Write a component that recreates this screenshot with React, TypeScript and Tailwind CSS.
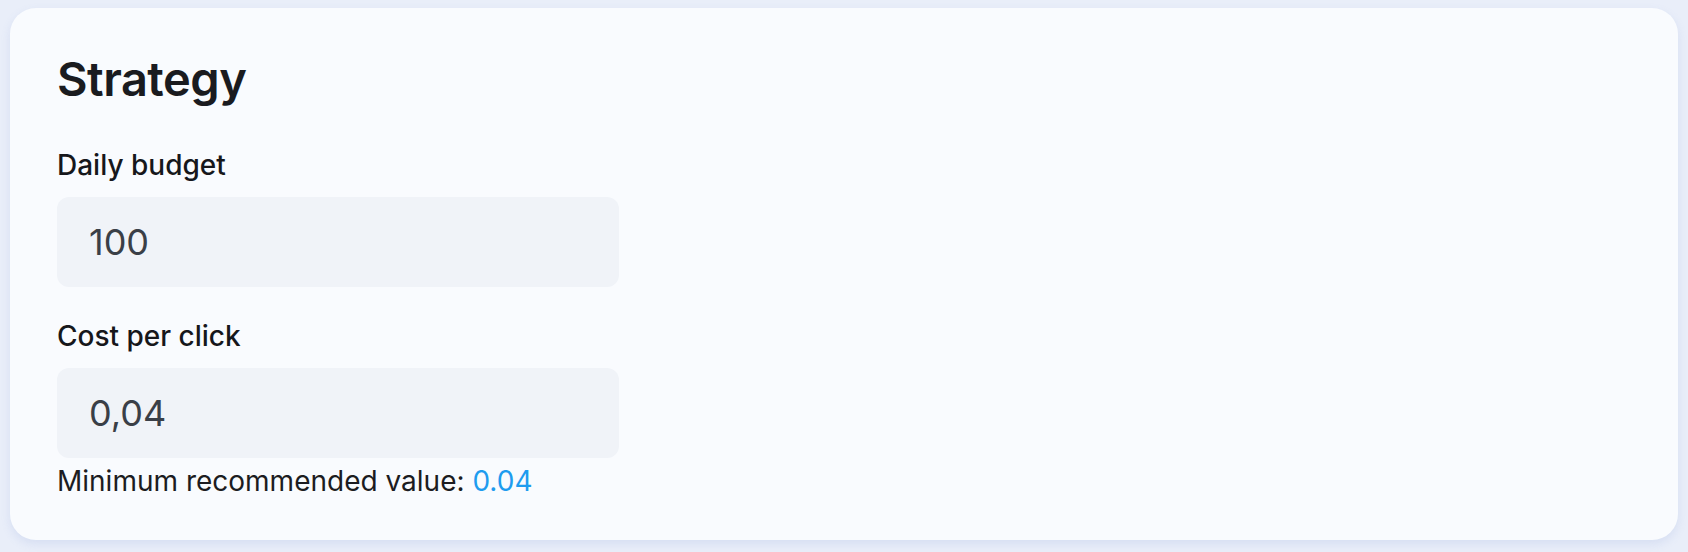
import { useState } from "react";

type FieldProps = {
  label: string;
  value: string;
  onChange: (v: string) => void;
  className?: string;
  children?: React.ReactNode;
};

function Field({ label, value, onChange, className, children }: FieldProps) {
  return (
    <div className={className}>
      <label className="block text-[28px] leading-[36px] font-[450] text-[#16171b]">
        {label}
      </label>
      <input
        value={value}
        onChange={(e) => onChange(e.target.value)}
        className="mt-[14px] block h-[90px] w-[562px] rounded-[12px] bg-[#f0f3f8] pl-[32px] text-[36px] text-[#3a3f47] outline-none"
      />
      {children}
    </div>
  );
}

export default function App() {
  const [budget, setBudget] = useState("100");
  const [cpc, setCpc] = useState("0,04");

  return (
    <div
      className="min-h-[552px] bg-[#e9eef9] pt-[8px] pl-[10px]"
      style={{ fontFamily: "Inter, 'Noto Sans', sans-serif" }}
    >
      <section className="w-[1668px] rounded-[26px] bg-[#f9fbfe] px-[47px] pt-[43px] pb-[41px] shadow-[0_4px_10px_rgba(120,140,210,0.16)]">
        <h2 className="text-[47px] leading-[56px] font-semibold tracking-[-0.5px] text-[#1a1b1f]">
          Strategy
        </h2>

        <Field
          label="Daily budget"
          value={budget}
          onChange={setBudget}
          className="mt-[40px]"
        />

        <Field
          label="Cost per click"
          value={cpc}
          onChange={setCpc}
          className="mt-[31px]"
        >
          <p className="mt-[5px] text-[28px] leading-[36px] text-[#1c1c21]">
            Minimum recommended value:{" "}
            <span className="text-[#1e9cef]">0.04</span>
          </p>
        </Field>
      </section>
    </div>
  );
}
